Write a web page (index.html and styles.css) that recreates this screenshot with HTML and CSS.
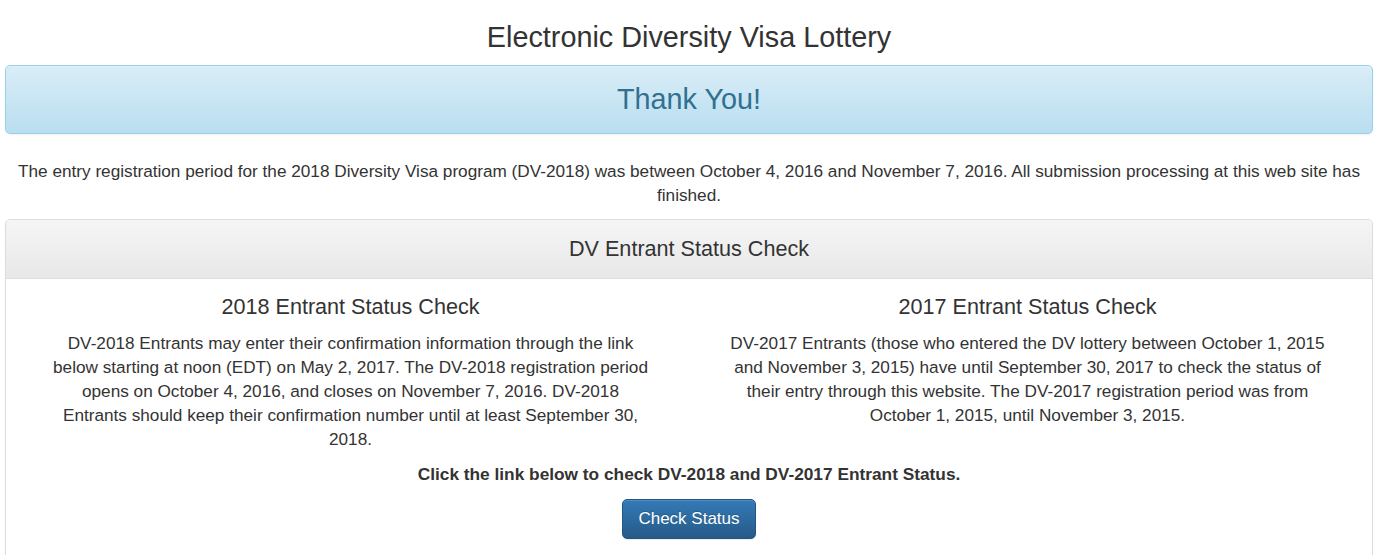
FILE: index.html
```html
<!DOCTYPE html>
<html lang="en">
<head>
<meta charset="utf-8">
<title>Electronic Diversity Visa Lottery</title>
<link rel="stylesheet" href="styles.css">
</head>
<body>
<div class="page">
  <h1 class="site-title">Electronic Diversity Visa Lottery</h1>
  <div class="alert">
    <h2 class="alert-title">Thank You!</h2>
  </div>
  <p class="intro">The entry registration period for the 2018 Diversity Visa program (DV-2018) was between October 4, 2016 and November 7, 2016. All submission processing at this web site has finished.</p>
  <div class="panel">
    <div class="panel-heading">DV Entrant Status Check</div>
    <div class="panel-body">
      <div class="cols">
        <div class="col">
          <h3 class="col-title">2018 Entrant Status Check</h3>
          <p class="col-text">DV-2018 Entrants may enter their confirmation information through the link below starting at noon (EDT) on May 2, 2017. The DV-2018 registration period opens on October 4, 2016, and closes on November 7, 2016. DV-2018 Entrants should keep their confirmation number until at least September 30, 2018.</p>
        </div>
        <div class="col">
          <h3 class="col-title">2017 Entrant Status Check</h3>
          <p class="col-text">DV-2017 Entrants (those who entered the DV lottery between October 1, 2015 and November 3, 2015) have until September 30, 2017 to check the status of their entry through this website. The DV-2017 registration period was from October 1, 2015, until November 3, 2015.</p>
        </div>
      </div>
      <p class="cta">Click the link below to check DV-2018 and DV-2017 Entrant Status.</p>
      <div class="btn-row"><a class="btn" href="#">Check Status</a></div>
    </div>
  </div>
</div>
</body>
</html>
```
FILE: styles.css
```css
* { box-sizing: border-box; }
html, body { margin: 0; padding: 0; background: #fff; }
body {
  font-family: "Liberation Sans", Arial, sans-serif;
  font-size: 17.2px;
  line-height: 24px;
  color: #333;
}
.page {
  margin: 0 8px 0 5px;
}
.site-title {
  margin: 22px 0 11px;
  font-size: 28.8px;
  font-weight: 400;
  line-height: 31.7px;
  text-align: center;
  color: #333;
}
.alert {
  margin: 0 0 25px;
  padding: 18px;
  border: 1px solid #9acfea;
  border-radius: 5px;
  background: linear-gradient(to bottom, #d9edf7 0%, #b9def0 100%);
  box-shadow: inset 0 1px 0 rgba(255,255,255,.25), 0 1px 2px rgba(0,0,0,.05);
  text-align: center;
}
.alert-title {
  margin: 0;
  font-size: 28.8px;
  font-weight: 400;
  line-height: 31px;
  color: #31708f;
}
.intro {
  margin: 0 0 12px;
  text-align: center;
}
.panel {
  border: 1px solid #ddd;
  border-radius: 5px;
  box-shadow: 0 1px 2px rgba(0,0,0,.05);
  background: #fff;
  min-height: 360px;
}
.panel-heading {
  padding: 17px 15px;
  font-size: 21.6px;
  line-height: 24px;
  text-align: center;
  color: #333;
  background: linear-gradient(to bottom, #f5f5f5 0%, #e8e8e8 100%);
  border-bottom: 1px solid #ddd;
  border-radius: 4px 4px 0 0;
}
.panel-body {
  padding: 16px 6px 18px;
}
.cols {
  display: grid;
  grid-template-columns: 1fr 1fr;
}
.col {
  padding: 0 38px;
  text-align: center;
}
.col-title {
  margin: 0 0 12px;
  font-size: 21.6px;
  font-weight: 400;
  line-height: 23.8px;
  color: #333;
}
.col-text {
  margin: 0 0 11px;
  font-size: 17.2px;
}
.cta {
  margin: 0 0 13px;
  text-align: center;
  font-weight: 700;
  font-size: 17.3px;
}
.btn-row {
  display: flex;
  justify-content: center;
}
.btn {
  display: inline-block;
  padding: 7px 15px;
  font-size: 17px;
  line-height: 24px;
  color: #fff;
  text-decoration: none;
  text-shadow: 0 -1px 0 rgba(0,0,0,.2);
  background: linear-gradient(to bottom, #337ab7 0%, #265a88 100%);
  border: 1px solid #245580;
  border-radius: 5px;
  box-shadow: inset 0 1px 0 rgba(255,255,255,.15), 0 1px 1px rgba(0,0,0,.075);
}
```
